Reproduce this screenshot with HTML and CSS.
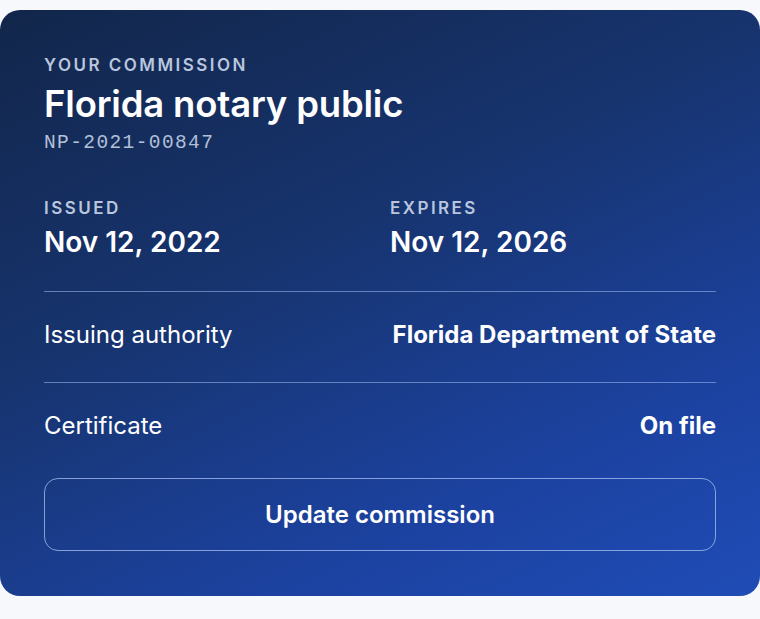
FILE: index.html
```html
<!DOCTYPE html>
<html>
<head>
<meta charset="utf-8">
<link rel="stylesheet" href="styles.css">
</head>
<body>
<div class="card">
  <div class="eyebrow">YOUR COMMISSION</div>
  <h1 class="title">Florida notary public</h1>
  <div class="code">NP-2021-00847</div>
  <div class="dates">
    <div class="date">
      <div class="eyebrow">ISSUED</div>
      <div class="date-value">Nov 12, 2022</div>
    </div>
    <div class="date">
      <div class="eyebrow">EXPIRES</div>
      <div class="date-value">Nov 12, 2026</div>
    </div>
  </div>
  <div class="row">
    <span class="row-label">Issuing authority</span>
    <span class="row-value">Florida Department of State</span>
  </div>
  <div class="row">
    <span class="row-label">Certificate</span>
    <span class="row-value">On file</span>
  </div>
  <button class="btn">Update commission</button>
</div>
</body>
</html>
```
FILE: styles.css
```css
html, body {
  margin: 0;
  padding: 0;
  background: #f6f8fc;
}
body {
  padding-top: 10px;
  font-family: Inter, "Noto Sans", sans-serif;
}
.card {
  box-sizing: border-box;
  width: 760px;
  border-radius: 20px;
  padding: 45px 44px 45px;
  background: linear-gradient(155deg, #12264a 0%, #17346f 40%, #1c42a0 75%, #1f4cb6 100%);
  color: #ffffff;
}
.eyebrow {
  font-size: 17px;
  line-height: 20px;
  font-weight: 600;
  letter-spacing: 0.145em;
  color: #b9c6de;
}
.title {
  margin: 7px 0 0;
  font-size: 36.5px;
  line-height: 44px;
  font-weight: 600;
  letter-spacing: -0.005em;
}
.code {
  margin-top: 6px;
  font-family: "Liberation Mono", monospace;
  font-size: 19.5px;
  line-height: 22px;
  letter-spacing: 1.4px;
  color: #b3c0d8;
}
.dates {
  display: grid;
  grid-template-columns: 1fr 1fr;
  column-gap: 20px;
  margin-top: 44px;
  padding-bottom: 32px;
}
.date-value {
  margin-top: 7px;
  font-size: 28px;
  line-height: 34px;
  font-weight: 600;
}
.row {
  display: flex;
  justify-content: space-between;
  align-items: center;
  border-top: 1.5px solid rgba(150, 180, 235, 0.6);
  padding: 27px 0 31px;
  font-size: 24px;
  line-height: 32px;
}
.row-label {
  font-weight: 400;
}
.row-value {
  font-weight: 700;
}
.btn {
  display: block;
  box-sizing: border-box;
  width: 100%;
  height: 73px;
  margin-top: 5px;
  border: 1.5px solid rgba(170, 195, 245, 0.75);
  border-radius: 14px;
  background: transparent;
  color: #ffffff;
  font-family: Inter, "Noto Sans", sans-serif;
  font-size: 24px;
  font-weight: 600;
}
```
